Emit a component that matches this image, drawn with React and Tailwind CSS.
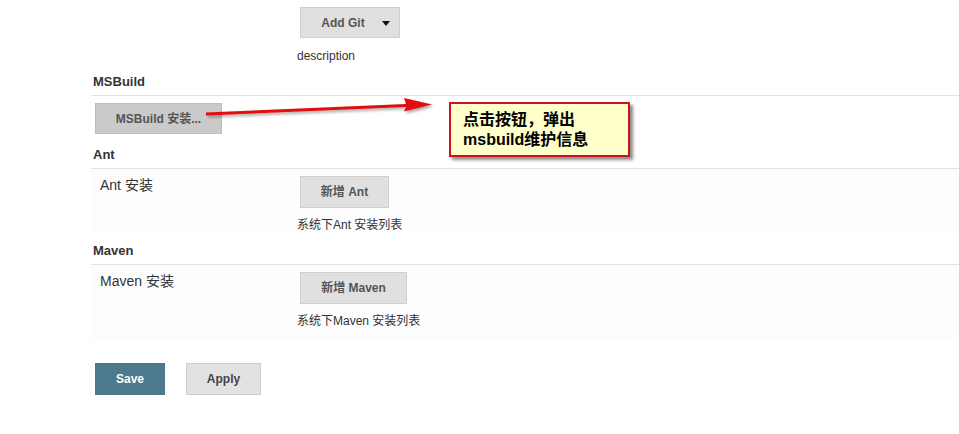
export default function App() {
  const font = "font-['Liberation_Sans','Noto_Sans_CJK_SC',sans-serif]";
  const btn =
    "flex items-center justify-center bg-[#e0e0e0] border border-[#cfcfcf] text-[12px] font-bold text-[#555]";
  return (
    <div className={`relative w-[959px] h-[434px] bg-white overflow-hidden ${font}`}>
      <div className="pl-[91px]">
        {/* Top git section */}
        <div className="pt-[7px] pl-[206px]">
          <div className={`${btn} ml-[3px] w-[100px] h-[31px] relative`}>
            <span className="mr-[14px]">Add Git</span>
            <span className="absolute right-[9px] top-[13px] w-0 h-0 border-l-[4px] border-r-[4px] border-t-[5px] border-l-transparent border-r-transparent border-t-[#111]" />
          </div>
          <div className="mt-[11px] text-[12px] leading-[15px] text-[#333]">description</div>
        </div>

        {/* MSBuild */}
        <div className="mt-[10px] pl-[2px] pb-[5px] border-b border-[#e2e2e2] text-[13px] leading-[16px] font-bold text-[#333]">
          MSBuild
        </div>
        <div className="mt-[7px] ml-[4px] w-[127px] h-[31px] flex items-center justify-center bg-[#cacaca] border border-[#bdbdbd] text-[12px] font-bold text-[#555]">
          MSBuild 安装...
        </div>

        {/* Ant */}
        <div className="mt-[13px] pl-[2px] pb-[5px] border-b border-[#e2e2e2] text-[13px] leading-[16px] font-bold text-[#333]">
          Ant
        </div>
        <div className="flex pt-[7px] bg-[#fdfdfd]">
          <div className="w-[206px] pl-[9px] text-[14px] leading-[18px] text-[#333]">Ant 安装</div>
          <div>
            <div className={`${btn} ml-[3px] w-[89px] h-[32px]`}>新增 Ant</div>
            <div className="mt-[10px] text-[12px] leading-[15px] text-[#333]">系统下Ant 安装列表</div>
          </div>
        </div>

        {/* Maven */}
        <div className="mt-[10px] pl-[2px] pb-[5px] border-b border-[#e2e2e2] text-[13px] leading-[16px] font-bold text-[#333]">
          Maven
        </div>
        <div className="flex pt-[7px] pb-[11px] bg-[#fdfdfd]">
          <div className="w-[206px] pl-[9px] text-[14px] leading-[18px] text-[#333]">Maven 安装</div>
          <div>
            <div className={`${btn} ml-[3px] w-[107px] h-[32px]`}>新增 Maven</div>
            <div className="mt-[10px] text-[12px] leading-[15px] text-[#333]">系统下Maven 安装列表</div>
          </div>
        </div>

        {/* Save/Apply */}
        <div className="mt-[23px] ml-[4px] flex gap-[21px]">
          <div className="w-[70px] h-[32px] flex items-center justify-center bg-[#4b7a8e] text-white text-[12px] font-bold">
            Save
          </div>
          <div className="w-[75px] h-[32px] flex items-center justify-center bg-[#e2e2e2] border border-[#cfcfcf] text-[#444] text-[12px] font-bold">
            Apply
          </div>
        </div>
      </div>

      {/* Arrow annotation */}
      <svg className="absolute left-0 top-0 pointer-events-none" width="959" height="434">
        <defs>
          <filter id="sh" x="-10%" y="-50%" width="120%" height="200%">
            <feDropShadow dx="2" dy="2" stdDeviation="1.5" floodColor="#000" floodOpacity="0.35" />
          </filter>
        </defs>
        <polygon
          filter="url(#sh)"
          fill="#e30b0b"
          points="206,112.5 406,104 404,98 432,104.5 404,111.5 406,107 206,115.5"
        />
      </svg>

      {/* Callout */}
      <div className="absolute left-[449px] top-[102px] w-[181px] h-[55px] bg-[#ffffcc] border-2 border-[#d0101a] shadow-[3px_3px_3px_rgba(0,0,0,0.45)] pl-[12px] pt-[6px] text-[16px] leading-[20px] font-bold text-black">
        <div>点击按钮，弹出</div>
        <div>msbuild维护信息</div>
      </div>
    </div>
  );
}
